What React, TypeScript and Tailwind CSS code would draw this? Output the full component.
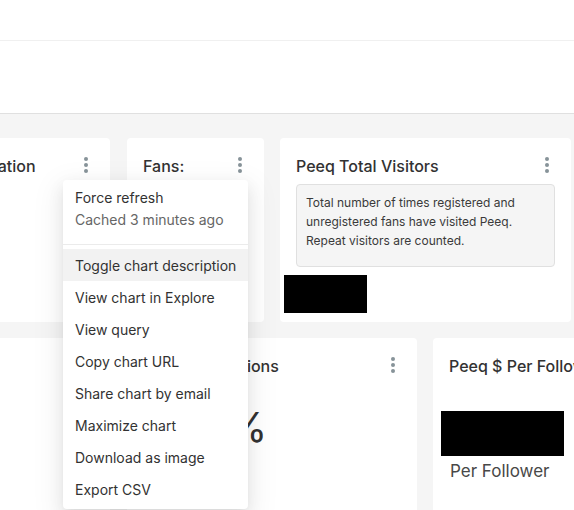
import React from "react";

function Kebab() {
  return (
    <div className="flex w-4 flex-col items-center gap-[2px] pt-[3px]">
      <span className="block h-1 w-1 rounded-full bg-[#879399]" />
      <span className="block h-1 w-1 rounded-full bg-[#879399]" />
      <span className="block h-1 w-1 rounded-full bg-[#879399]" />
    </div>
  );
}

function CardHeader({ title, pad = "pl-4" }: { title: string; pad?: string }) {
  return (
    <div className={"flex items-start justify-between pr-4 pt-4 " + pad}>
      <div className="whitespace-nowrap text-[16px] font-medium leading-6 text-[#323232]">{title}</div>
      <Kebab />
    </div>
  );
}

const items = [
  "Toggle chart description",
  "View chart in Explore",
  "View query",
  "Copy chart URL",
  "Share chart by email",
  "Maximize chart",
  "Download as image",
  "Export CSV",
];

export default function App() {
  return (
    <div className="relative h-[510px] w-[574px] overflow-hidden bg-[#f5f5f5] font-[Inter,sans-serif]">
      <div className="h-[41px] border-b border-[#f0f0f0] bg-white" />
      <div className="h-[73px] border-b border-[#e0e0e0] bg-white" />
      <div className="pt-6">
        <div className="ml-[-130px] flex h-[184px]">
          <div className="w-[240px] shrink-0 rounded bg-white">
            <CardHeader title="Fan Registration" pad="pl-[42px]" />
          </div>
          <div className="ml-[17px] w-[137px] shrink-0 rounded bg-white">
            <CardHeader title="Fans:" />
          </div>
          <div className="ml-4 w-[291px] shrink-0 rounded bg-white">
            <CardHeader title="Peeq Total Visitors" />
            <div className="mx-4 mt-[6px] h-[83px] rounded border border-[#e0e0e0] bg-[#f5f5f5] px-[9px] pt-[8px] text-[12px] leading-[19px] text-[#3a3a3a]">
              Total number of times registered and unregistered fans have visited Peeq. Repeat visitors are counted.
            </div>
            <div className="ml-1 mt-2 h-[38px] w-[83px] bg-black" />
          </div>
        </div>
        <div className="ml-[-130px] mt-4 flex h-[200px]">
          <div className="w-[240px] shrink-0 rounded bg-white" />
          <div className="ml-[17px] w-[290px] shrink-0 rounded bg-white">
            <CardHeader title="Fan Conversions" pad="pl-[24px]" />
            <div className="whitespace-nowrap px-4 pt-[25px] text-[41px] leading-[48px] text-[#323232]">24.7%</div>
          </div>
          <div className="ml-4 w-[300px] shrink-0 rounded bg-white">
            <CardHeader title="Peeq $ Per Follower" />
            <div className="ml-2 mt-[33px] h-[45px] w-[123px] bg-black" />
            <div className="whitespace-nowrap pl-[17px] pt-[3px] text-[17px] leading-6 text-[#484848]">Per Follower</div>
          </div>
        </div>
      </div>

      <div className="absolute left-[63px] top-[180px] w-[185px] rounded bg-white py-1 shadow-[0_3px_6px_-4px_rgba(0,0,0,0.12),0_6px_16px_0_rgba(0,0,0,0.08),0_9px_28px_8px_rgba(0,0,0,0.05)]">
        <div className="px-3 pb-[13px] pt-[3px] text-[14px] leading-[22px]">
          <div className="whitespace-nowrap text-[#323232]">Force refresh</div>
          <div className="whitespace-nowrap text-[#666666]">Cached 3 minutes ago</div>
        </div>
        <div className="h-px bg-[#ebebeb]" />
        <div className="mt-1">
          {items.map((t, i) => (
            <div
              key={t}
              className={
                i === 0
                  ? "flex h-8 items-center whitespace-nowrap bg-[#f2f2f2] px-3 text-[14px] text-[#323232]"
                  : "flex h-8 items-center whitespace-nowrap px-3 text-[14px] text-[#323232]"
              }
            >
              {t}
            </div>
          ))}
        </div>
      </div>
    </div>
  );
}
